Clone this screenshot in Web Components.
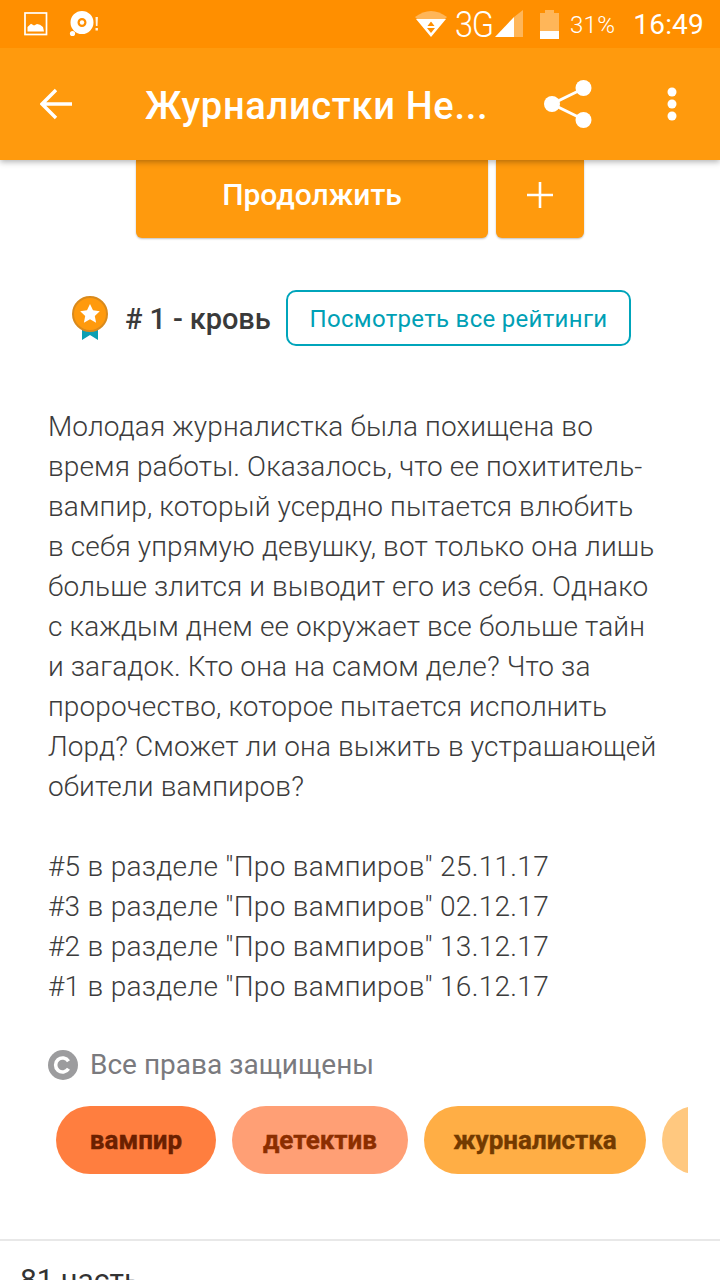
<!DOCTYPE html>
<html lang="ru"><head><meta charset="utf-8"><title>Story</title>
<style>
html,body{margin:0;padding:0;background:#fff}
body{width:720px;height:1280px;overflow:hidden;font-family:Roboto,"Noto Sans",sans-serif}
</style></head><body>
<story-page>
  <status-bar></status-bar>
  <app-toolbar title-text="Журналистки Не..."></app-toolbar>
  <action-row label="Продолжить"></action-row>
  <rank-row rank="# 1 - кровь" link="Посмотреть все рейтинги"></rank-row>
  <story-desc>Молодая журналистка была похищена во
время работы. Оказалось, что ее похититель-
вампир, который усердно пытается влюбить
в себя упрямую девушку, вот только она лишь
больше злится и выводит его из себя. Однако
с каждым днем ее окружает все больше тайн
и загадок. Кто она на самом деле? Что за
пророчество, которое пытается исполнить
Лорд? Сможет ли она выжить в устрашающей
обители вампиров?

<span style="letter-spacing:.3px">#5 в разделе "Про вампиров" 25.11.17
#3 в разделе "Про вампиров" 02.12.17
#2 в разделе "Про вампиров" 13.12.17
#1 в разделе "Про вампиров" 16.12.17</span></story-desc>
  <copyright-line>Все права защищены</copyright-line>
  <tag-list>
    <tag-pill bg="#ff7e3f" fg="#6b2000" w="160">вампир</tag-pill>
    <tag-pill bg="#ff9f75" fg="#8c2e00" w="176">детектив</tag-pill>
    <tag-pill bg="#ffae45" fg="#733a00" w="222">журналистка</tag-pill>
    <tag-pill bg="#ffc87f" fg="#733a00" w="120"></tag-pill>
  </tag-list>
  <parts-count>81 часть</parts-count>
</story-page>
<script>
function def(name, html){
  customElements.define(name, class extends HTMLElement{
    connectedCallback(){
      const r=this.shadowRoot||this.attachShadow({mode:'open'});
      r.innerHTML=typeof html==='function'?html(this):html;
    }
  });
}
def('story-page',`<style>:host{display:flex;flex-direction:column;width:720px;height:1280px;overflow:hidden;background:#fff}</style><slot></slot>`);

def('status-bar',`<style>
:host{display:flex;align-items:center;height:48px;flex:none;background:#ff8f00;color:#fff;padding:0 16px 0 24px;box-sizing:border-box;position:relative;z-index:3}
svg{display:block;flex:none}
.sp{flex:1}
.g{display:block;width:35px;flex:none;font:300 37px/48px Roboto,sans-serif;letter-spacing:-1.5px;margin:1px 5px 0 7px;white-space:nowrap;transform:scaleX(.88);transform-origin:left center}
.p{font:300 24px/48px Roboto,sans-serif;margin:2px 18px 0 11px;letter-spacing:.3px}
.t{font:400 28px/48px Roboto,sans-serif;letter-spacing:.2px;margin-top:2px}
</style>
<svg width="24" height="24" viewBox="0 0 24 24"><rect x="1" y="1" width="21.500" height="21.500" fill="none" stroke="#fff" stroke-width="1.700"/><path d="M3.500 19.500V15l3.500-3.200 3 1.700 3-1.500 3 .8 3 2.200 1 4.500z" fill="#fff"/></svg>
<svg style="margin-left:21px" width="32" height="26" viewBox="0 0 32 26"><path fill="#fff" fill-rule="evenodd" d="M13 0a11.500 11.500 0 1 1 0 23a11.500 11.500 0 1 1 0-23zM13 7a4.500 4.500 0 1 0 0 9a4.500 4.500 0 1 0 0-9z"/><circle cx="13" cy="11.500" r="2.200" fill="#fff"/><circle cx="3.500" cy="22.500" r="2.600" fill="#fff"/><path d="M26.500 6h2.400l-.4 9h-1.600zM26.500 17h2.400v2.400h-2.400z" fill="#fff" opacity=".9"/></svg>
<span class="sp"></span>
<svg width="34" height="30" viewBox="0 0 34 30"><path d="M1 8 Q17 -4 33 8 L28 13 H6z" fill="#fff" opacity=".35"/><path fill="#fff" fill-rule="evenodd" d="M2 10 L32 10 L17 28z M17 12.500 L13.500 17 H20.500z M13 19 L17 24 L21 19z"/></svg>
<span class="g">3G</span>
<svg width="28" height="28" viewBox="0 0 28 28"><path d="M28 0V27H19V7z" fill="#fff" opacity=".35"/><path d="M19 7V27H0z" fill="#fff"/></svg>
<svg style="margin-left:17px" width="19" height="29" viewBox="0 0 19 29"><path d="M5 0h9v3h5v18H0V3h5z" fill="#fff" opacity=".35"/><rect y="21" width="19" height="8" fill="#fff"/></svg>
<span class="p">31%</span><span class="t">16:49</span>`);

def('app-toolbar',el=>`<style>
:host{display:flex;align-items:center;height:112px;flex:none;background:#ff9a0d;color:#fff;box-shadow:0 2px 6px rgba(0,0,0,.3);position:relative;z-index:2;padding-left:40px;box-sizing:border-box}
svg{display:block;flex:none}
h1{margin:3px 0 0 73px;width:344px;flex:none;font:500 38px/44px Roboto,sans-serif;white-space:nowrap;letter-spacing:.7px;overflow:hidden}
</style>
<svg width="32" height="32" viewBox="0 0 32 32"><path d="M32 16H3M16 2 2 16l14 14" fill="none" stroke="#fff" stroke-width="3.400"/></svg>
<h1>${el.getAttribute('title-text')}</h1>
<svg style="margin-left:55px" width="48" height="48" viewBox="0 0 48 48"><path d="M39.500 8.500 8 24l31.500 15.500" fill="none" stroke="#fff" stroke-width="3"/><circle cx="8" cy="24" r="8" fill="#fff"/><circle cx="39.500" cy="8" r="8" fill="#fff"/><circle cx="39.500" cy="40" r="8" fill="#fff"/></svg>
<svg style="margin-left:75px" width="10" height="34" viewBox="0 0 10 34"><circle cx="5" cy="5" r="4.500" fill="#fff"/><circle cx="5" cy="17" r="4.500" fill="#fff"/><circle cx="5" cy="29" r="4.500" fill="#fff"/></svg>`);

def('action-row',el=>`<style>
:host{display:flex;justify-content:center;gap:8px;height:78px;flex:none}
div{background:#ff9a0d;color:#fff;border-radius:0 0 6px 6px;box-shadow:0 1px 2px rgba(0,0,0,.25);display:flex;align-items:center;justify-content:center;padding-bottom:9px;box-sizing:border-box}
.a{width:352px;font:500 30px/36px Roboto,sans-serif}
.b{width:88px}
</style><div class="a">${el.getAttribute('label')}</div><div class="b"><svg width="26" height="26" viewBox="0 0 26 26"><path d="M13 0v26M0 13h26" stroke="#fff" stroke-width="2.600"/></svg></div>`);

def('rank-row',el=>`<style>
:host{display:flex;align-items:center;flex:none;margin-top:52px;height:56px;padding-left:72px}
svg{flex:none;display:block}
b{font:500 29px/36px Roboto,sans-serif;color:#3a3a3a;margin:2px 0 0 17px;width:146px;letter-spacing:-.1px;white-space:nowrap;flex:none}
a{margin-left:15px;width:345px;height:56px;box-sizing:border-box;border:2px solid #00a5bb;border-radius:10px;color:#00a0b5;font:400 24px/55px Roboto,sans-serif;text-align:center;letter-spacing:.3px;white-space:nowrap}
</style><svg width="36" height="44" viewBox="0 0 36 44"><path d="M10 28h16v16l-8-5-8 5z" fill="#0b9fb3"/><circle cx="18" cy="18" r="17" fill="#ff9a0d" stroke="#d98a1c" stroke-width="2"/><path d="m18 8 3 6.300 6.800.9-5 4.700 1.300 6.800-6.100-3.400-6.100 3.400 1.300-6.800-5-4.700 6.800-.9z" fill="#fff"/></svg><b>${el.getAttribute('rank')}</b><a>${el.getAttribute('link')}</a>`);

def('story-desc',`<style>
:host{display:block;flex:none;margin-top:61px;padding-left:48px;font:300 28px/40px Roboto,sans-serif;letter-spacing:.12px;color:#3c3c3c;white-space:pre}
</style><slot></slot>`);

def('copyright-line',`<style>
:host{display:flex;align-items:center;flex:none;height:40px;margin-top:38px;padding-left:48px;font:400 28px/40px Roboto,sans-serif;color:#7a7a7e}
svg{display:block;margin-right:12px}
</style><svg width="30" height="30" viewBox="0 0 30 30"><circle cx="15" cy="15" r="15" fill="#9c9c9e"/><path d="M20.500 11.200A7 7 0 1 0 20.500 18.800" fill="none" stroke="#fff" stroke-width="3.600"/></svg><slot></slot>`);

def('tag-list',`<style>
:host{display:flex;gap:16px;flex:none;width:632px;margin:21px 0 0 56px;overflow:hidden}
</style><slot></slot>`);

def('tag-pill',el=>`<style>
:host{display:block;flex:none;width:${el.getAttribute('w')}px;text-align:center;height:68px;border-radius:34px;background:${el.getAttribute('bg')};color:${el.getAttribute('fg')};font:700 26px/68px Roboto,sans-serif;-webkit-text-stroke:.4px ${el.getAttribute('fg')};white-space:nowrap}
</style><slot></slot>`);

def('parts-count',`<style>
:host{display:block;flex:none;margin-top:65px;border-top:2px solid #e8e8e8;padding:21px 0 0 20px;font:400 30px/36px Roboto,sans-serif;color:#333}
</style><slot></slot>`);
</script>
</body></html>
